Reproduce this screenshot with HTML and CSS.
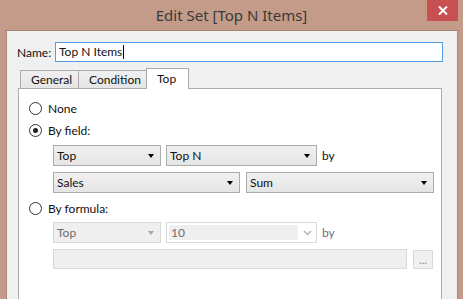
FILE: index.html
```html
<!DOCTYPE html>
<html lang="en">
<head>
  <meta charset="UTF-8" />
  <title>Edit Set [Top N Items]</title>
  <link rel="stylesheet" href="styles.css">
</head>
<body>
  <div class="window">
    <div class="titlebar">
      <div class="title">Edit Set [Top N Items]</div>
      <div class="close">
        <svg width="10" height="9" viewBox="0 0 10 9">
          <path d="M1 0.5 L9 8.5 M9 0.5 L1 8.5" stroke="#fff" stroke-width="2" />
        </svg>
      </div>
    </div>

    <div class="client">
      <div class="name-row">
        <span class="label">Name:</span>
        <div class="name-input">Top N Items<span class="caret"></span></div>
      </div>

      <div class="tabs">
        <div class="tab">General</div>
        <div class="tab">Condition</div>
        <div class="tab active">Top</div>
      </div>

      <div class="panel">
        <div class="radio-row first">
          <span class="radio"></span>None
        </div>
        <div class="radio-row">
          <span class="radio checked"></span>By field:
        </div>

        <div class="combo-row first-combo">
          <div class="combo w-short">Top<span class="arrow"></span></div>
          <div class="combo w-mid">Top N<span class="arrow"></span></div>
          <span class="by">by</span>
        </div>
        <div class="combo-row wide-row">
          <div class="combo w-wide">Sales<span class="arrow"></span></div>
          <div class="combo w-wide2">Sum<span class="arrow"></span></div>
        </div>

        <div class="radio-row formula">
          <span class="radio"></span>By formula:
        </div>

        <div class="combo-row">
          <div class="combo w-short disabled">Top<span class="arrow"></span></div>
          <div class="edit-combo">
            <span class="edit-field">10</span>
            <svg class="chevron" width="9" height="6" viewBox="0 0 9 6">
              <path d="M1 1 L4.5 4.5 L8 1" fill="none" stroke="#b4b4b4" stroke-width="1.5" />
            </svg>
          </div>
          <span class="by disabled-text">by</span>
        </div>
        <div class="formula-row">
          <div class="formula-box"></div>
          <div class="dots-btn">...</div>
        </div>
      </div>
    </div>
  </div>
</body>
</html>
```

FILE: styles.css
```css
body {
  margin: 0;
  background: #c39b88;
  font-family: 'Lato', 'Noto Sans', sans-serif;
  font-size: 12px;
  color: #111;
  overflow: hidden;
}
.window {
  width: 463px;
  height: 299px;
  overflow: hidden;
}
.titlebar {
  height: 30px;
  display: grid;
  grid-template-columns: 1fr auto 1fr;
}
.title {
  grid-column: 2;
  font-family: 'Noto Sans', sans-serif;
  font-size: 15px;
  color: #3a3a3a;
  line-height: 30px;
}
.close {
  grid-column: 3;
  justify-self: end;
  align-self: start;
  width: 31px;
  height: 21px;
  margin-right: 5px;
  background: #c75050;
  display: flex;
  align-items: center;
  justify-content: center;
}
.client {
  margin-left: 6px;
  width: 450px;
  height: 268px;
  background: #f0f0f0;
  border: 1px solid #a98676;
  border-bottom: none;
}
.name-row {
  display: flex;
  align-items: center;
  padding: 11px 0 0 10px;
}
.label {
  width: 38px;
}
.name-input {
  width: 383px;
  height: 18px;
  border: 1px solid #569de5;
  background: #fff;
  line-height: 18px;
  padding-left: 3px;
  display: flex;
  align-items: center;
}
.caret {
  width: 1px;
  height: 14px;
  background: #000;
  margin-left: 1px;
}
.tabs {
  display: flex;
  align-items: flex-end;
  margin: 6px 0 0 13px;
  height: 20px;
}
.tab {
  height: 17px;
  line-height: 17px;
  padding: 0 10px;
  border: 1px solid #acacac;
  border-bottom: none;
  background: linear-gradient(#f0f0f0, #e5e5e5);
  margin-right: -1px;
}
.tab:first-child {
  width: 37px;
}
.tab:nth-child(2) {
  width: 47px;
}
.tab.active {
  height: 20px;
  line-height: 19px;
  width: 21px;
  background: #fff;
  position: relative;
  z-index: 1;
  margin-bottom: -1px;
}
.panel {
  margin-left: 11px;
  width: 424px;
  height: 211px;
  border: 1px solid #acacac;
  border-bottom: none;
  background: #fff;
  padding-top: 11px;
  box-sizing: border-box;
}
.radio-row {
  display: flex;
  align-items: center;
  height: 16px;
  margin: 6px 0 0 10px;
}
.radio-row.first {
  margin-top: 0;
}
.radio-row.formula {
  margin-top: 7px;
}
.radio {
  width: 11px;
  height: 11px;
  border: 1px solid #333;
  border-radius: 50%;
  margin-right: 6px;
  display: flex;
  align-items: center;
  justify-content: center;
  background: #fff;
}
.radio.checked::after {
  content: "";
  width: 5px;
  height: 5px;
  border-radius: 50%;
  background: #222;
}
.combo-row {
  display: flex;
  align-items: center;
  margin: 6px 0 0 34px;
  gap: 5px;
}
.combo-row.first-combo {
  margin-top: 7px;
}
.combo-row.wide-row {
  gap: 6px;
}
.combo {
  height: 19px;
  line-height: 19px;
  border: 1px solid #acacac;
  background: linear-gradient(#f0f0f0, #e5e5e5);
  padding: 0 6px 0 3px;
  display: flex;
  justify-content: space-between;
  align-items: center;
  box-sizing: content-box;
}
.arrow {
  width: 0;
  height: 0;
  border-left: 3.5px solid transparent;
  border-right: 3.5px solid transparent;
  border-top: 4px solid #000;
}
.w-short { width: 97px; }
.w-mid { width: 140px; }
.w-wide { width: 176px; }
.w-wide2 { width: 177px; }
.combo.disabled {
  border-color: #d9d9d9;
  background: #efefef;
  color: #6d6d6d;
}
.combo.disabled .arrow {
  border-top-color: #a5a5a5;
}
.edit-combo {
  width: 149px;
  height: 19px;
  border: 1px solid #d9d9d9;
  background: #fff;
  display: flex;
  align-items: center;
}
.edit-field {
  flex: 1;
  height: 15px;
  line-height: 15px;
  margin: 0 5px 0 2px;
  padding-left: 2px;
  background: #efefef;
  color: #6d6d6d;
}
.chevron {
  margin-right: 4px;
}
.disabled-text {
  color: #6d6d8d;
}
.formula-row {
  display: flex;
  align-items: flex-start;
  margin: 6px 0 0 34px;
}
.formula-box {
  width: 352px;
  height: 18px;
  border: 1px solid #d9d9d9;
  background: #efefef;
}
.dots-btn {
  margin: 1px 0 0 6px;
  width: 18px;
  height: 17px;
  border: 1px solid #d9d9d9;
  background: #f0f0f0;
  color: #888;
  font-size: 11px;
  line-height: 17px;
  text-align: center;
}
```
